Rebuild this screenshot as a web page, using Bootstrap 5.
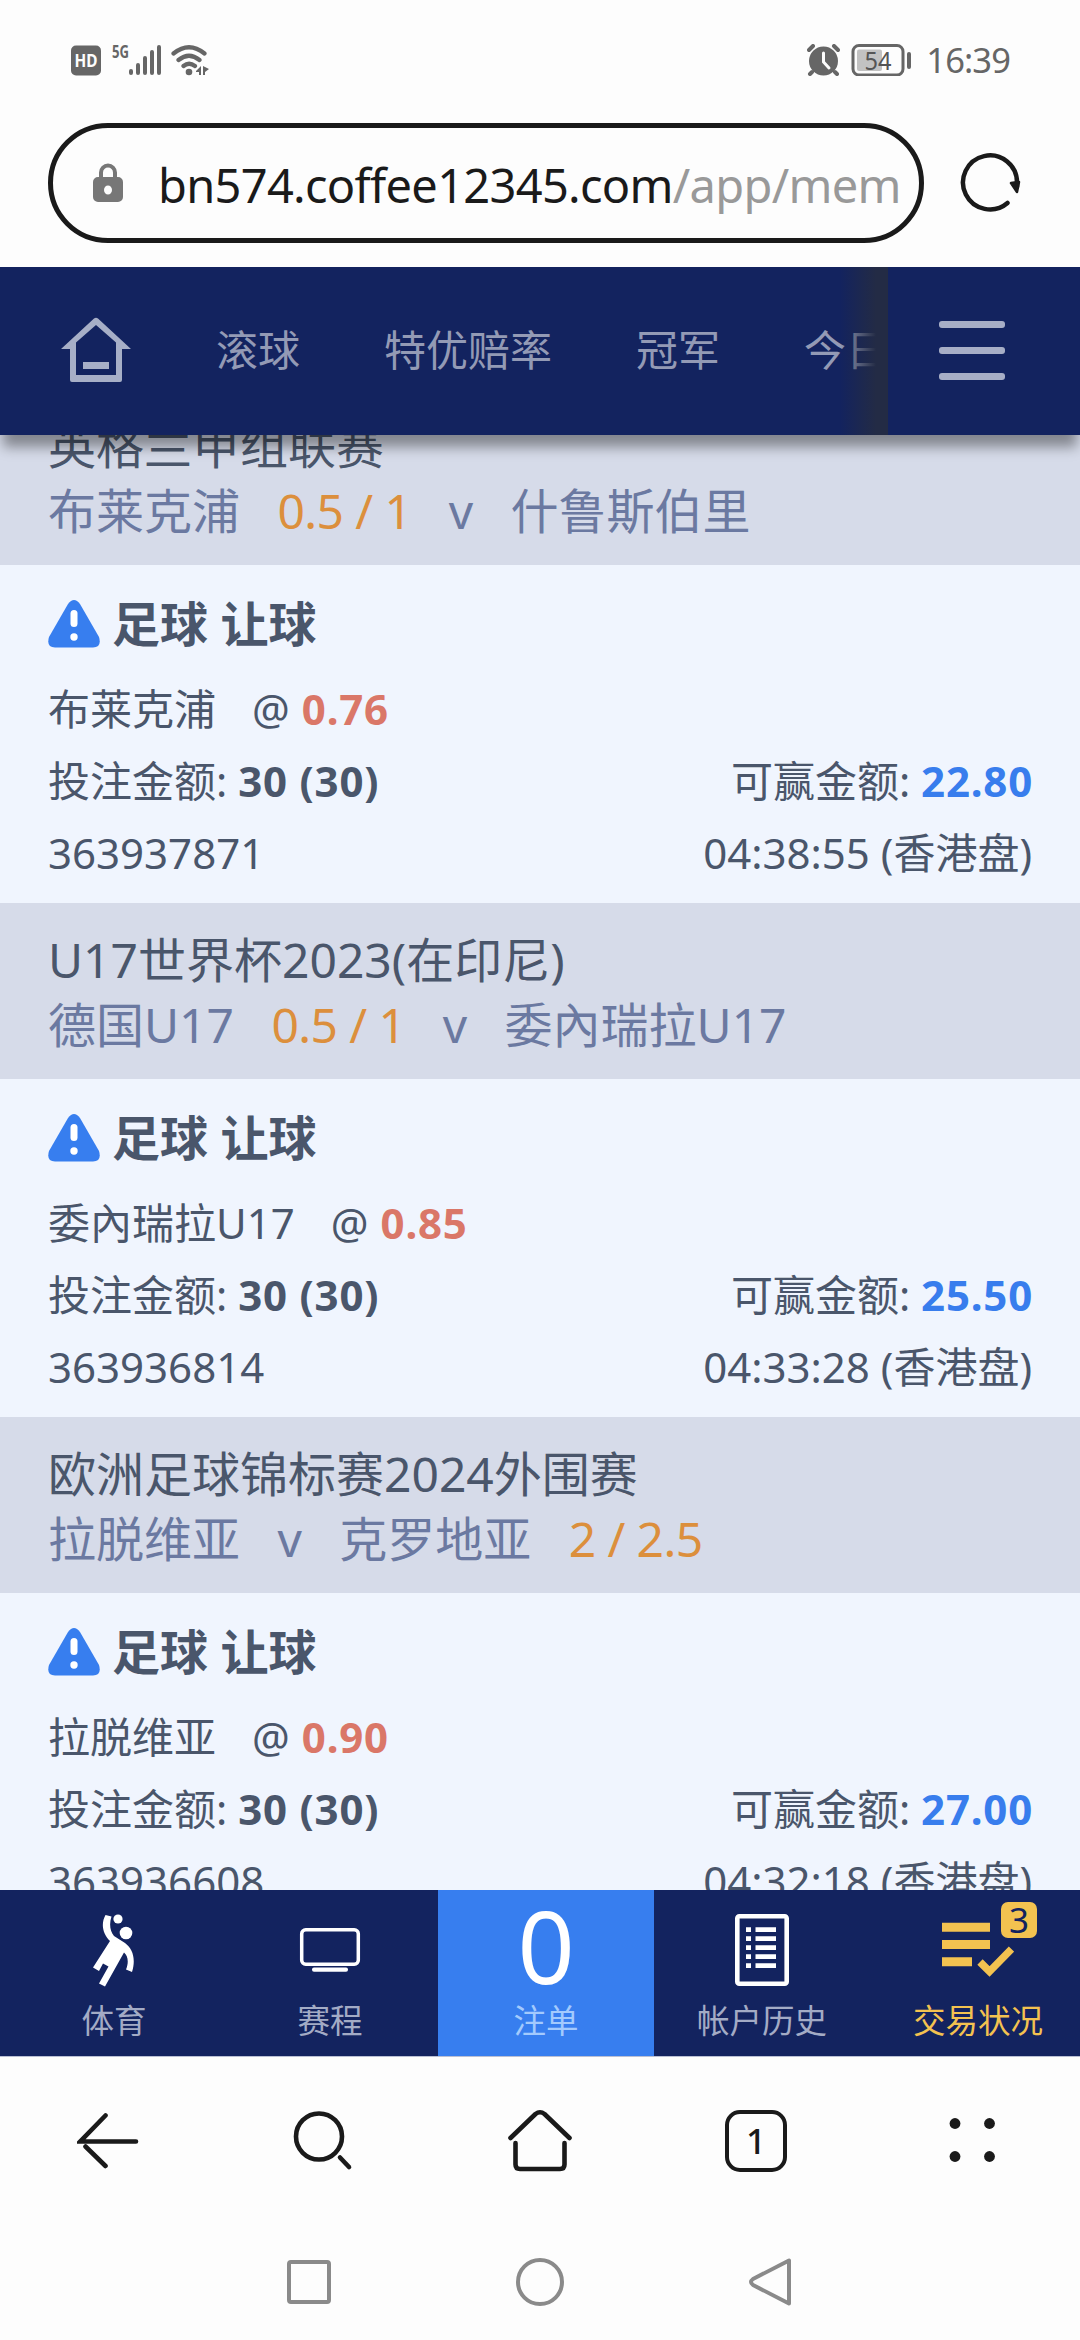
<!DOCTYPE html>
<html lang="zh-CN">
<head>
<meta charset="utf-8">
<meta name="viewport" content="width=device-width, initial-scale=1">
<title>交易状况</title>
<link href="https://cdn.jsdelivr.net/npm/bootstrap@5.3.0/dist/css/bootstrap.min.css" rel="stylesheet">
<style>
body{font-family:"Noto Sans","Noto Sans CJK SC",sans-serif;color:#4a566b;background:#fdfdfd;width:1080px;height:2340px;overflow:hidden}
svg{display:block;flex:none}
.statusbar{height:119px;padding:0 70px 0 71px;color:#666}
.clock{font-size:34.5px;line-height:40px;letter-spacing:-.9px}
.addressbar{height:148px;padding:4px 59px 0 48px}
.urlpill{width:876px;height:120px;border:5px solid #1a1a1a;padding-left:40px}
.urltext{font-size:47px;line-height:60px;letter-spacing:-.7px;color:#1a1a1a;margin-left:35px;padding-top:3px;white-space:nowrap}
.urltext span{color:#999}
.topnav{height:168px;background:#13235f;box-shadow:0 15px 12px -3px rgba(0,0,0,.39);z-index:3}
.topnav .homebtn{padding-left:60px;width:174px}
.topnav .tabs{width:714px;height:168px}
.topnav .tabs a{padding:0 42px 3px;font-size:42px;line-height:60px;color:#939ab5;white-space:nowrap;text-decoration:none}
.tabfade{right:0;top:0;width:48px;height:168px;background:linear-gradient(90deg,rgba(35,43,69,0),#232b45 75%)}
.betlist{height:1455px;background:#f0f5fe}
.matchhead{background:#d6dbe9;height:176px;padding:25px 48px 22px;font-size:48px;line-height:64px}
.matchhead.cutoff{margin-top:-46px}
.matchhead>div{white-space:pre}
.teams{color:#6b79a1;padding-top:1px}
.teams i{font-style:normal;color:#dc8f3c;letter-spacing:-.6px}
.ticket{height:338px;padding:23px 48px 14px;font-size:42px;line-height:72px}
.kind{height:72px;margin-bottom:13px;font-size:48px;font-weight:700}
.pick,.ticket span{white-space:pre}
.pick{word-spacing:1.1px}
.ticket b{letter-spacing:.8px}
.odds{color:#da7768}
.win{color:#387ded;margin-right:-1px}
.bottomnav{height:167px;background:#13235f;border-bottom:1px solid #b9bfd4;padding-left:6px;z-index:3}
.bottomnav a{width:216px;flex:none;text-decoration:none;color:#a3abc5;font-size:32.5px;line-height:40px}
.bottomnav .pic{height:111px;padding-top:24px}
.bottomnav .slip{background:#377eef;color:#a3cafd}
.bottomnav .slip .pic{font-size:100px;line-height:100px;color:#fff;padding-top:5px}
.bottomnav .trades{color:#f3c250}
.countbadge{left:131px;top:12px;width:36px;height:36px;border-radius:7px;background:#f3c250;color:#13235f;font-size:35px;line-height:35px;text-align:center}
.browserbar{height:168px}
.browserbar>div{width:216px}
.tabcount{width:62px;height:62px;border:4.5px solid #1a1a1a;border-radius:15px;color:#1a1a1a;font-size:35px;line-height:53px;font-weight:500;text-align:center}
.sysnav{height:115px;padding-top:32px;gap:184px}
</style>
</head>
<body>
<header>
  <div class="statusbar d-flex align-items-center justify-content-between">
    <div class="d-flex">
      <svg width="140" height="32" viewBox="0 0 140 32" fill="#666">
        <rect x="0" y="1.500" width="30" height="30" rx="5"/>
        <text x="15" y="23" font-size="18" font-weight="700" text-anchor="middle" fill="#fdfdfd" textLength="23" lengthAdjust="spacingAndGlyphs">HD</text>
        <text x="41" y="14" font-size="18" font-weight="700" textLength="17" lengthAdjust="spacingAndGlyphs">5G</text>
        <g stroke="#666" stroke-width="4" stroke-linecap="round"><path d="M60 27v2M67 21v8M74 14v15M81 8v21M88 3v26"/></g>
        <g fill="none" stroke="#666" stroke-width="4.200" stroke-linecap="round"><path d="M102.500 9.500Q118 -3 133.500 9.500M107.500 16Q118 7.500 128.500 16M112.500 22Q118 17.500 124 22"/></g>
        <circle cx="118" cy="28" r="3.300"/><path d="M125 27l5-5v9h-2v-3h-3zM132 22l6 3-4 3v3h-2z"/>
      </svg>
    </div>
    <div class="d-flex align-items-center">
      <svg width="33" height="32" viewBox="0 0 33 32">
        <path d="M5 28l-2 2M28 28l2 2M2 6l4-4M31 6l-4-4" stroke="#666" stroke-width="4" stroke-linecap="round"/>
        <circle cx="16.500" cy="17" r="14.500" fill="#666"/><path d="M16.500 9v9l5.500 6" fill="none" stroke="#fdfdfd" stroke-width="3" stroke-linecap="round"/>
      </svg>
      <svg class="ms-2" width="66" height="32" viewBox="0 0 66 32" style="margin-right:12px">
        <rect x="5" y="1.500" width="50" height="29.500" rx="6" fill="none" stroke="#666" stroke-width="3"/>
        <rect x="9" y="5.500" width="25" height="21.500" rx="2" fill="#c2c2c2"/>
        <rect x="59" y="8" width="4" height="17" rx="2" fill="#666"/>
        <text x="30" y="25.500" font-size="26" text-anchor="middle" fill="#555" textLength="27" lengthAdjust="spacingAndGlyphs">54</text>
      </svg>
      <span class="clock">16:39</span>
    </div>
  </div>
  <div class="addressbar d-flex">
    <div class="urlpill rounded-pill d-flex align-items-center">
      <svg width="30" height="40" viewBox="0 0 30 40"><path d="M8 16V9.500a7 7 0 0 1 14 0V16" fill="none" stroke="#777" stroke-width="4"/><path fill="#777" fill-rule="evenodd" d="M5 14h20a5 5 0 0 1 5 5v15a5 5 0 0 1-5 5H5a5 5 0 0 1-5-5V19a5 5 0 0 1 5-5zM15 22.500a4 4.500 0 1 0 0 9 4 4.500 0 0 0 0-9z"/></svg>
      <div class="urltext">bn574.coffee12345.com<span>/app/mem</span></div>
    </div>
    <svg width="62" height="62" viewBox="0 0 62 62" style="margin:29px 0 0 35px"><path d="M48.500 51A27 27 0 1 1 58 31v4" fill="none" stroke="#1a1a1a" stroke-width="4.500" stroke-linecap="round"/><path d="M52 31l8-1-2 10z" fill="#1a1a1a" stroke="#1a1a1a" stroke-width="2.500" stroke-linejoin="round"/></svg>
  </div>
</header>

<nav class="topnav d-flex align-items-center position-relative">
  <div class="homebtn"><svg width="72" height="68" viewBox="0 0 72 68"><path fill="#a7afc7" fill-rule="evenodd" d="M34 1.500Q36 0 38 1.500L71 32H62V63Q62 65 60 65H12Q10 65 10 63V32H1ZM36 8L16 25.500V58H56V25.500Z"/><path fill="#a7afc7" d="M23 45h26v7H23z"/></svg></div>
  <div class="tabs d-flex align-items-center position-relative overflow-hidden">
    <a href="#">滚球</a><a href="#">特优赔率</a><a href="#">冠军</a><a href="#">今日</a>
    <span class="tabfade position-absolute"></span>
  </div>
  <svg width="66" height="60" viewBox="0 0 66 60" style="margin-left:51px"><g fill="#a7aec6"><rect y="0" width="66" height="7" rx="3"/><rect y="26" width="66" height="7" rx="3"/><rect y="52" width="66" height="7" rx="3"/></g></svg>
</nav>

<main class="betlist overflow-hidden">
  <section>
    <div class="matchhead cutoff"><div>英格兰甲组联赛</div><div class="teams">布莱克浦   <i>0.5 / 1</i>   v   什鲁斯伯里</div></div>
    <div class="ticket">
      <div class="kind d-flex align-items-center"><svg width="52" height="48" viewBox="0 0 52 48" class="me-2"><path d="M20 4Q26-4 32 4L51 37Q54 47 45 47.500H7Q-2 47 1 37Z" fill="#377eef"/><path d="M26 13.500v10" stroke="#fff" stroke-width="7" stroke-linecap="round"/><circle cx="26" cy="37" r="3.700" fill="#fff"/></svg><span class="ms-1">足球 让球</span></div>
      <div class="pick">布莱克浦   @ <b class="odds">0.76</b></div>
      <div class="d-flex justify-content-between"><span>投注金额: <b>30 (30)</b></span><span>可赢金额: <b class="win">22.80</b></span></div>
      <div class="d-flex justify-content-between"><span>363937871</span><span>04:38:55 (香港盘)</span></div>
    </div>
  </section>
  <section>
    <div class="matchhead"><div>U17世界杯2023(在印尼)</div><div class="teams">德国U17   <i>0.5 / 1</i>   v   委內瑞拉U17</div></div>
    <div class="ticket">
      <div class="kind d-flex align-items-center"><svg width="52" height="48" viewBox="0 0 52 48" class="me-2"><path d="M20 4Q26-4 32 4L51 37Q54 47 45 47.500H7Q-2 47 1 37Z" fill="#377eef"/><path d="M26 13.500v10" stroke="#fff" stroke-width="7" stroke-linecap="round"/><circle cx="26" cy="37" r="3.700" fill="#fff"/></svg><span class="ms-1">足球 让球</span></div>
      <div class="pick">委內瑞拉U17   @ <b class="odds">0.85</b></div>
      <div class="d-flex justify-content-between"><span>投注金额: <b>30 (30)</b></span><span>可赢金额: <b class="win">25.50</b></span></div>
      <div class="d-flex justify-content-between"><span>363936814</span><span>04:33:28 (香港盘)</span></div>
    </div>
  </section>
  <section>
    <div class="matchhead"><div>欧洲足球锦标赛2024外围赛</div><div class="teams">拉脱维亚   v   克罗地亚   <i>2 / 2.5</i></div></div>
    <div class="ticket">
      <div class="kind d-flex align-items-center"><svg width="52" height="48" viewBox="0 0 52 48" class="me-2"><path d="M20 4Q26-4 32 4L51 37Q54 47 45 47.500H7Q-2 47 1 37Z" fill="#377eef"/><path d="M26 13.500v10" stroke="#fff" stroke-width="7" stroke-linecap="round"/><circle cx="26" cy="37" r="3.700" fill="#fff"/></svg><span class="ms-1">足球 让球</span></div>
      <div class="pick">拉脱维亚   @ <b class="odds">0.90</b></div>
      <div class="d-flex justify-content-between"><span>投注金额: <b>30 (30)</b></span><span>可赢金额: <b class="win">27.00</b></span></div>
      <div class="d-flex justify-content-between"><span>363936608</span><span>04:32:18 (香港盘)</span></div>
    </div>
  </section>
</main>

<nav class="bottomnav d-flex overflow-hidden position-relative">
  <a href="#" class="d-flex flex-column align-items-center"><span class="pic"><svg width="42" height="73" viewBox="0 0 42 73" fill="#fff"><circle cx="25" cy="5" r="4.600"/><circle cx="33" cy="19" r="6.300"/><path d="M12.500 1L18.500 2.500C16 10 17 17 21 22L32 29C40 35 43 45 39 58L33 55.500C36 48 35 42 31 38.500L12 72.500L6 69.500L15.500 52.500L10 49.500L6 57L0 53.500L17 27C9 19 8 9 12.500 1Z"/></svg></span><span>体育</span></a>
  <a href="#" class="d-flex flex-column align-items-center"><span class="pic"><svg width="62" height="73" viewBox="0 0 62 73"><rect x="2.700" y="15.700" width="56.600" height="34.600" rx="4" fill="none" stroke="#fff" stroke-width="3.500"/><rect x="13" y="53.500" width="36" height="4.300" rx="2" fill="#fff"/></svg></span><span>赛程</span></a>
  <a href="#" class="slip d-flex flex-column align-items-center"><span class="pic">0</span><span>注单</span></a>
  <a href="#" class="d-flex flex-column align-items-center"><span class="pic"><svg width="54" height="73" viewBox="0 0 54 73"><rect x="2.300" y="2.300" width="49.400" height="67.400" rx="2" fill="none" stroke="#fff" stroke-width="4.600"/><path d="M11 15.700h5M20.500 15.700h20.500M11 24.700h5M20.500 24.700h20.500M11 33.700h5M20.500 33.700h20.500M11 42.700h5M20.500 42.700h20.500M11 51.700h5M20.500 51.700h20.500" stroke="#fff" stroke-width="4.700"/></svg></span><span>帐户历史</span></a>
  <a href="#" class="trades d-flex flex-column align-items-center position-relative"><span class="pic"><svg width="72" height="73" viewBox="0 0 72 73"><path d="M0 13.300h48M0 30.500h48M0 47.700h30" stroke="#f3c250" stroke-width="9"/><path d="M38 48l9.500 9.500L69.500 35" fill="none" stroke="#f3c250" stroke-width="7.500"/></svg></span><span>交易状况</span><span class="countbadge position-absolute">3</span></a>
</nav>

<footer>
  <div class="browserbar d-flex align-items-center">
    <div class="d-flex justify-content-center"><svg width="62" height="64" viewBox="0 0 62 64" fill="none" stroke="#1a1a1a" stroke-width="4.600" stroke-linecap="round"><path d="M28.500 6.500L3.300 32.500H59M28.500 57L8.500 37.500"/></svg></div>
    <div class="d-flex justify-content-center"><svg width="62" height="64" viewBox="0 0 62 64" fill="none" stroke="#1a1a1a" stroke-width="4.600" stroke-linecap="round"><circle cx="26" cy="27.500" r="23"/><path d="M47 48.500l9 9.500"/></svg></div>
    <div class="d-flex justify-content-center"><svg width="66" height="64" viewBox="0 0 66 64" fill="none" stroke="#1a1a1a" stroke-width="4.600" stroke-linecap="round" stroke-linejoin="round"><path d="M3.500 29L28.500 5Q33 1.500 37.500 5L62.500 29M8.500 34V55.500Q8.500 60 13 60H53Q57.500 60 57.500 55.500V34"/></svg></div>
    <div class="d-flex justify-content-center"><div class="tabcount">1</div></div>
    <div class="d-flex justify-content-center"><svg width="46" height="46" viewBox="0 0 46 46" fill="#1a1a1a"><circle cx="6" cy="5.500" r="5.400"/><circle cx="40.500" cy="5.500" r="5.400"/><circle cx="6" cy="38.500" r="5.400"/><circle cx="40.500" cy="38.500" r="5.400"/></svg></div>
  </div>
  <div class="sysnav d-flex justify-content-center">
    <svg width="46" height="50" viewBox="0 0 46 50" fill="none" stroke="#8a8a8a" stroke-width="4"><rect x="3" y="5" width="40" height="40" rx="2"/></svg>
    <svg width="48" height="50" viewBox="0 0 48 50" fill="none" stroke="#8a8a8a" stroke-width="4"><circle cx="24" cy="25" r="22"/></svg>
    <svg width="46" height="50" viewBox="0 0 46 50" fill="none" stroke="#8a8a8a" stroke-width="4" stroke-linejoin="round"><path d="M41 3.500V46.500L5 28Q1 25 5 22Z"/></svg>
  </div>
</footer>
<script src="https://cdn.jsdelivr.net/npm/bootstrap@5.3.0/dist/js/bootstrap.bundle.min.js"></script>
</body>
</html>
